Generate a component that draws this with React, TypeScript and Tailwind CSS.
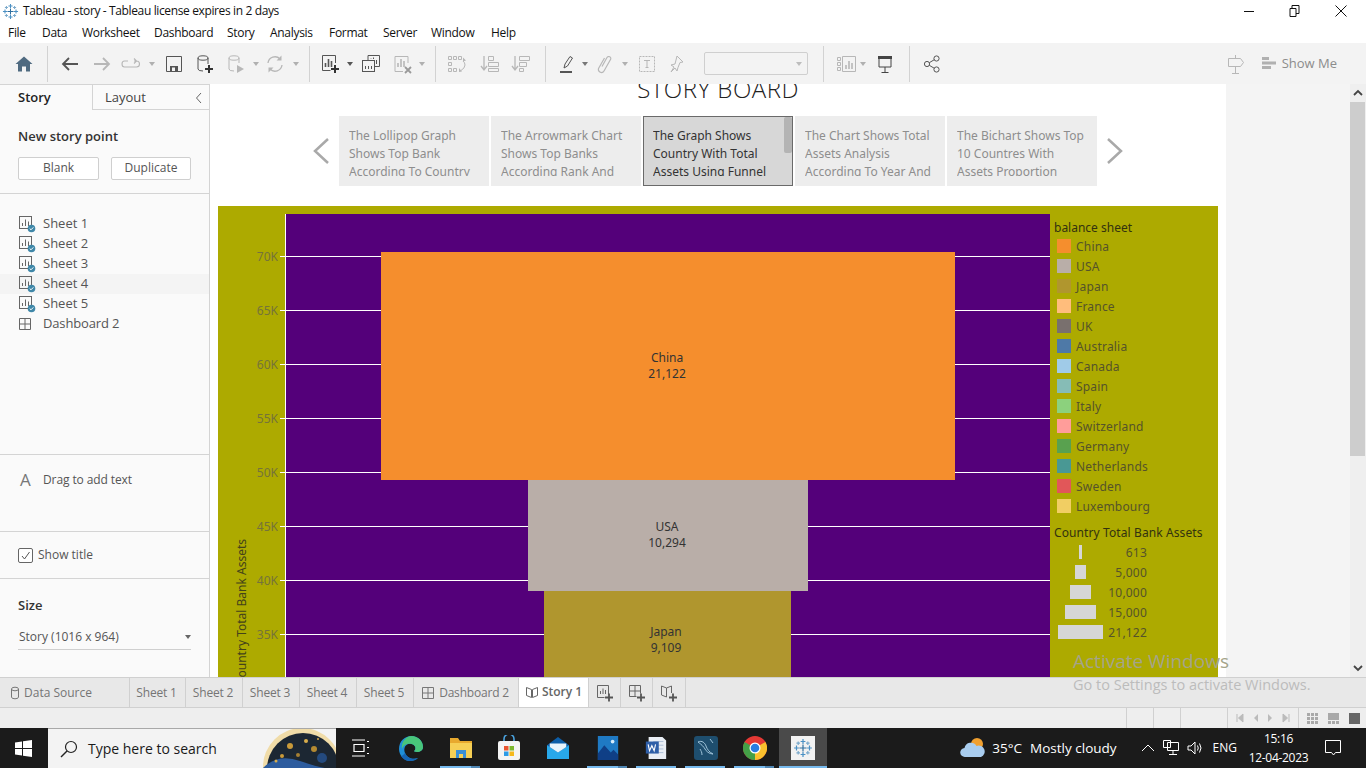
import React from "react";

const ui = "font-['Open_Sans','Noto_Sans',sans-serif]";
const tb = "font-['Noto_Sans','Open_Sans',sans-serif]";

type SvgP = { children: React.ReactNode; className?: string; w?: number; h?: number; vb?: string };
function S({ children, className = "", w = 20, h = 20, vb }: SvgP) {
  return (
    <svg width={w} height={h} viewBox={vb ?? `0 0 ${w} ${h}`} fill="none" className={"shrink-0 " + className}>
      {children}
    </svg>
  );
}
const Sep = ({ c }: { c: string }) => <div className={"h-[36px] w-px shrink-0 bg-[#d2d2d2] " + c} />;
const Dd = ({ c, d = "#8a8a8a" }: { c: string; d?: string }) => (
  <S w={6} h={4} className={c}>
    <path d="M0 0h6L3 4z" fill={d} />
  </S>
);

function TableauLogo({ size = 20, c1 = "#4a90c4", c2 = "#7aa9cb" }: { size?: number; c1?: string; c2?: string }) {
  const cross = (x: number, y: number, r: number, col: string, k: string) => (
    <path key={k} d={`M${x - r} ${y}H${x + r}M${x} ${y - r}V${y + r}`} stroke={col} strokeWidth="1.2" />
  );
  return (
    <S w={size} h={size} vb="0 0 20 20">
      {cross(10, 10, 3.6, "#2f6f9f", "a")}
      {cross(10, 3.5, 2.4, c1, "b")}
      {cross(10, 16.5, 2.4, c1, "c")}
      {cross(3.5, 10, 2.4, c1, "d")}
      {cross(16.5, 10, 2.4, c1, "e")}
      {cross(5.2, 5.2, 1.8, c2, "f")}
      {cross(14.8, 5.2, 1.8, c2, "g")}
      {cross(5.2, 14.8, 1.8, c2, "h")}
      {cross(14.8, 14.8, 1.8, c2, "i")}
    </S>
  );
}

function SheetIcon({ check = true }: { check?: boolean }) {
  return (
    <S w={18} h={18}>
      <rect x="1.5" y="1.5" width="12" height="12" stroke="#666" fill="none" />
      <path d="M4.5 11V8M7.5 11V4.5M10.5 11V6.5" stroke="#666" />
      {check && (
        <>
          <circle cx="13.5" cy="13.5" r="3.8" fill="#3f87a8" />
          <path d="M11.7 13.5l1.3 1.3 2.3-2.4" stroke="#fff" strokeWidth="1" />
        </>
      )}
    </S>
  );
}

const DashIcon = ({ col = "#666" }: { col?: string }) => (
  <S w={14} h={14}>
    <path d="M1.5 1.5h11v11h-11zM7 1.5v11M1.5 7h11" stroke={col} />
  </S>
);
const BookIcon = () => (
  <S w={14} h={14}>
    <path d="M1.5 2.5L6.5 4.500v8l-5-2zM12.500 2.500L7.500 4.500v8l5-2z" stroke="#666" />
  </S>
);

function TitleBar() {
  return (
    <div className={`flex h-[22px] items-center bg-white text-[12px] text-[#111] ${ui}`}>
      <div className="ml-[2px] w-[21px]">
        <TableauLogo size={17} />
      </div>
      <span className="tracking-[-0.37px]">Tableau - story - Tableau license expires in 2 days</span>
      <div className="ml-auto flex items-center">
        <S w={10} h={10} className="mr-[35px]">
          <path d="M0 5.500h10" stroke="#111" />
        </S>
        <S w={11} h={12} className="mr-[35px]">
          <path d="M1 3.500h6v8H1zM3 3.500v-3h7v8H7" stroke="#111" />
        </S>
        <S w={12} h={12} className="mr-[19px]">
          <path d="M.5.500l11 11M11.500.500l-11 11" stroke="#111" />
        </S>
      </div>
    </div>
  );
}

function MenuBar() {
  return (
    <div className={`flex h-[21px] items-center bg-white pl-[8px] text-[12px] tracking-[-0.3px] text-[#111] ${ui}`}>
      <span className="w-[34px]">File</span>
      <span className="w-[40px]">Data</span>
      <span className="w-[72px]">Worksheet</span>
      <span className="w-[73px]">Dashboard</span>
      <span className="w-[43px]">Story</span>
      <span className="w-[59px]">Analysis</span>
      <span className="w-[54px]">Format</span>
      <span className="w-[48px]">Server</span>
      <span className="w-[60px]">Window</span>
      <span>Help</span>
    </div>
  );
}

function Toolbar() {
  const on = "#555";
  const off = "#b7b7b7";
  return (
    <div className="flex h-[41px] items-center bg-[#f3f3f3]">
      <S className="ml-[14px]">
        <path d="M1.500 10L10 2.500 18.500 10H16v7.500h-4v-5H8v5H4V10z" fill="#4f6a80" />
      </S>
      <Sep c="ml-[13px]" />
      <S className="ml-[12px]">
        <path d="M18 10H3M9 4l-6 6 6 6" stroke={on} strokeWidth="1.800" />
      </S>
      <S className="ml-[12px]">
        <path d="M2 10h15M11 4l6 6-6 6" stroke={off} strokeWidth="1.800" />
      </S>
      <S className="ml-[9px]">
        <path d="M7 7H3.500Q1 7 1 10t2.500 3h12q3 0 3-3t-3-3H13M13 4.500L15.500 7 13 9.500" stroke={off} strokeWidth="1.100" />
      </S>
      <Dd c="ml-[8px]" d="#b0b0b0" />
      <S className="ml-[9px]">
        <path d="M2.500 2.500h15v15h-15z" stroke={on} />
        <path d="M6 17V12h8v5" fill={on} />
        <rect x="8" y="13.500" width="3" height="3.500" fill="#f3f3f3" />
      </S>
      <S className="ml-[11px]">
        <ellipse cx="8" cy="4" rx="5" ry="2.200" stroke={on} />
        <path d="M3 4v11q0 2 5 2M13 4v6" stroke={on} />
        <path d="M14 11v8M10 15h8" stroke="#333" strokeWidth="2" />
      </S>
      <S className="ml-[11px]">
        <ellipse cx="8" cy="4" rx="5" ry="2.200" stroke={off} />
        <path d="M3 4v11q0 2 5 2M13 4v5" stroke={off} />
        <path d="M11 11l7 4-7 4z" fill={off} />
      </S>
      <Dd c="ml-[7px]" d="#b0b0b0" />
      <S className="ml-[6px]">
        <path d="M3 9a7 7 0 0 1 12-4M17 11a7 7 0 0 1-12 4" stroke={off} strokeWidth="1.300" />
        <path d="M16.500 1.500v5h-5zM3.500 18.500v-5h5z" fill={off} />
      </S>
      <Dd c="ml-[8px]" d="#b0b0b0" />
      <Sep c="ml-[10px]" />
      <S className="ml-[10px]">
        <path d="M15.500 9V1.500h-13v15h8" stroke={on} />
        <path d="M5.500 13V9M8.500 13V5M11.500 13V7" stroke={on} strokeWidth="1.600" />
        <path d="M15 11v8M11 15h8" stroke="#333" strokeWidth="2" />
      </S>
      <Dd c="ml-[7px]" d="#555" />
      <S className="ml-[8px]">
        <path d="M7 6V1.500h11.500v11H14" stroke={on} />
        <rect x="1.500" y="6.500" width="12" height="11" stroke={on} fill="#f3f3f3" />
        <path d="M10 5V4.500M12.500 5V3.500M15.500 10V6M4.500 15v-3M7.500 15v-3M10.500 15v-3" stroke={on} />
      </S>
      <S className="ml-[11px]">
        <path d="M16 9V2.500H3v15h8" stroke={off} />
        <path d="M6 13V9M9 13V5M12 13V7" stroke={off} strokeWidth="1.600" />
        <path d="M13 13l6 6M19 13l-6 6" stroke="#9a9a9a" strokeWidth="1.800" />
      </S>
      <Dd c="ml-[7px]" d="#b0b0b0" />
      <Sep c="ml-[10px]" />
      <S className="ml-[11px]">
        <path d="M1.500 2.500h3v3h-3zM6.500 2.500h3v3h-3zM11.500 2.500h3v3h-3zM1.500 8.500h3v3h-3zM1.500 14.500h3v3h-3zM6.500 14.500h3v3h-3z" stroke={off} />
        <path d="M16 7a5 5 0 0 1 2 4q0 3-4 5.500" stroke={off} />
        <path d="M16 3.500v4l3-1zM12 14v4l3-.5z" fill={off} />
      </S>
      <S className="ml-[13px]">
        <path d="M4 2v13M1 12l3 4 3-4" stroke={off} strokeWidth="1.300" />
        <path d="M8.500 2.500h5v4h-5zM8.500 8.500h10v4h-10zM8.500 14.500h10v3h-10z" stroke={off} />
      </S>
      <S className="ml-[11px]">
        <path d="M4 2v13M1 12l3 4 3-4" stroke={off} strokeWidth="1.300" />
        <path d="M8.500 2.500h10v4h-10zM8.500 8.500h7v4h-7zM8.500 14.500h4v3h-4z" stroke={off} />
      </S>
      <Sep c="ml-[14px]" />
      <S className="ml-[12px]">
        <path d="M6 14l1-4L12 2.500l2.500 1.500-5 8z" stroke={on} />
        <rect x="2" y="17" width="12" height="2" fill={on} />
      </S>
      <Dd c="ml-[4px]" d="#777" />
      <S className="ml-[7px]">
        <path d="M7 12.500L12 3.500a2 2 0 0 1 3.500 2L9 17a3 3 0 0 1-5.200-3L9.500 4" stroke={off} strokeWidth="1.200" />
      </S>
      <Dd c="ml-[7px]" d="#b0b0b0" />
      <S className="ml-[9px]">
        <rect x="2.500" y="2.500" width="15" height="15" stroke={off} strokeDasharray="2 1" />
        <path d="M7 6.500h6M10 6.500v7M8.500 13.500h3" stroke={off} />
      </S>
      <S className="ml-[10px]">
        <path d="M10 2l6 6-3 .5-2 5-1 3.500-2-3-4 4 3-5-3-2 4-1z" stroke={off} />
      </S>
      <div className="ml-[17px] flex h-[23px] w-[104px] items-center justify-end rounded-[2px] border border-[#cfcfcf] bg-[#f3f3f3] pr-[5px]">
        <Dd c="" d="#bdbdbd" />
      </div>
      <Sep c="ml-[15px]" />
      <S className="ml-[12px]">
        <path d="M6.500 2.500h13v15h-13z" stroke={off} />
        <path d="M10 15v-4M13 15V7M16 15v-6" stroke={off} strokeWidth="1.600" />
        <path d="M1.500 3.500h3v3h-3zM1.500 8.500h3v3h-3zM1.500 13.500h3v3h-3z" stroke={off} />
      </S>
      <Dd c="ml-[4px]" d="#b0b0b0" />
      <S className="ml-[9px]">
        <path d="M4 4h12v9H4z" stroke="#444" fill="none" />
        <path d="M3 2h14v3H3z" fill="#444" />
        <path d="M10 13v5M6.500 18.500h7" stroke="#444" />
      </S>
      <Sep c="ml-[14px]" />
      <S className="ml-[12px]">
        <circle cx="14.500" cy="4.500" r="2.600" stroke={on} />
        <circle cx="5" cy="10" r="2.600" stroke={on} />
        <circle cx="14.500" cy="15.500" r="2.600" stroke={on} />
        <path d="M7.300 8.700l5-3M7.300 11.300l5 3" stroke={on} />
      </S>
      <S className="ml-auto">
        <path d="M9.500 1v3M9.500 13v6M6 19.500h7" stroke={off} />
        <path d="M2.500 4.500h12l3 4-3 4h-12z" stroke={off} />
      </S>
      <S w={16} h={16} className="ml-[16px]">
        <path d="M0 1h7v3H0zM0 5.500h14v3H0zM0 10h9v3H0z" fill="#b0b0b0" />
      </S>
      <span className={`ml-[4px] mr-[29px] text-[13px] text-[#8c8c8c] ${ui}`}>Show Me</span>
    </div>
  );
}

const sheets = ["Sheet 1", "Sheet 2", "Sheet 3", "Sheet 4", "Sheet 5"];

function Sidebar() {
  return (
    <div className={`flex w-[210px] shrink-0 flex-col border-r border-t border-[#d4d4d4] bg-[#fafafa] text-[#555] ${ui}`}>
      <div className="flex h-[25px] text-[13px]">
        <div className="flex w-[92px] items-center pl-[18px] font-semibold text-[#222]">Story</div>
        <div className="flex flex-1 items-center border-b border-l border-[#d4d4d4] pl-[12px] pt-[1px] text-[#444]">
          Layout
          <S w={8} h={12} className="ml-auto mr-[6px]">
            <path d="M6 1L1.500 6 6 11" stroke="#666" />
          </S>
        </div>
      </div>
      <div className="h-[84px] border-b border-[#d4d4d4] px-[18px] pt-[17px]">
        <div className="text-[13px] font-semibold leading-[18px] text-[#333]">New story point</div>
        <div className="mt-[12px] flex gap-[12px] text-[12px]">
          <div className="flex h-[23px] w-[81px] items-center justify-center rounded-[2px] border border-[#cfcfcf] bg-white pb-[2px]">Blank</div>
          <div className="flex h-[23px] w-[80px] items-center justify-center rounded-[2px] border border-[#cfcfcf] bg-white pb-[2px]">Duplicate</div>
        </div>
      </div>
      <div className="h-[261px] border-b border-[#d4d4d4] pt-[20px] text-[13px]">
        {sheets.map((s, i) => (
          <div key={s} className={"flex h-[20px] items-center pl-[18px] " + (i === 3 ? "bg-[#f4f4f4]" : "")}>
            <div className="w-[25px]">
              <SheetIcon />
            </div>
            {s}
          </div>
        ))}
        <div className="flex h-[20px] items-center pl-[18px] tracking-[-0.15px]">
          <div className="w-[25px]">
            <DashIcon />
          </div>
          Dashboard 2
        </div>
      </div>
      <div className="h-[77px] border-b border-[#d4d4d4] pt-[13px]">
        <div className="flex h-[24px] items-center text-[12px] tracking-[-0.1px]">
          <span className="w-[43px] pl-[20px] text-[17px] text-[#777]">A</span>
          Drag to add text
        </div>
      </div>
      <div className="flex h-[47px] items-center border-b border-[#d4d4d4] pl-[18px] text-[12px]">
        <div className="mr-[5px] flex h-[15px] w-[15px] items-center justify-center rounded-[2px] border border-[#666] bg-white">
          <S w={11} h={11}>
            <path d="M2 6l2.500 3L9.500 2" stroke="#555" />
          </S>
        </div>
        Show title
      </div>
      <div className="px-[18px] pt-[17px]">
        <div className="text-[13px] font-semibold leading-[18px] text-[#333]">Size</div>
        <div className="mt-[12px] flex h-[24px] items-center border-b border-[#cfcfcf] pb-[1px] pl-[1px] text-[12px]">
          Story (1016 x 964)
          <Dd c="ml-auto" d="#666" />
        </div>
      </div>
    </div>
  );
}

const storyPoints = [
  ["The Lollipop Graph", "Shows Top Bank", "According To Country"],
  ["The Arrowmark Chart", "Shows Top Banks", "According Rank And"],
  ["The Graph Shows", "Country With Total", "Assets Using Funnel"],
  ["The Chart Shows Total", "Assets Analysis", "According To Year And"],
  ["The Bichart Shows Top", "10 Countres With", "Assets Proportion"],
];

function StoryNav() {
  return (
    <div className={`mt-[11px] flex h-[70px] items-center text-[12px] leading-[18px] ${tb}`}>
      <S w={18} h={26} className="ml-[102px] mr-[9px]">
        <path d="M16 1L3 13l13 12" stroke="#a9a9a9" strokeWidth="2.500" />
      </S>
      <div className="flex gap-[2px]">
        {storyPoints.map((p, i) => (
          <div
            key={p[0]}
            className={
              "relative h-[70px] w-[150px] overflow-hidden " +
              (i === 2 ? "border border-[#6a6a6a] bg-[#d7d7d7] pl-[9px] pt-[10px] text-[#333]" : "bg-[#ededed] pl-[10px] pt-[11px] text-[#8e8e8e]")
            }
          >
            <div className="h-[49px] overflow-hidden whitespace-nowrap">
              {p.map((l) => (
                <div key={l}>{l}</div>
              ))}
            </div>
            {i === 2 && <div className="absolute right-0 top-0 h-[36px] w-[8px] rounded-[2px] bg-[#b4b4b4]" />}
          </div>
        ))}
      </div>
      <S w={18} h={26} className="ml-[9px]">
        <path d="M2 1l13 12L2 25" stroke="#a9a9a9" strokeWidth="2.500" />
      </S>
    </div>
  );
}

const ticks = ["70K", "65K", "60K", "55K", "50K", "45K", "40K", "35K"];
const legend = [
  ["China", "bg-[#f58e2d]"],
  ["USA", "bg-[#b9aea8]"],
  ["Japan", "bg-[#b0962e]"],
  ["France", "bg-[#ffbd7c]"],
  ["UK", "bg-[#79706e]"],
  ["Australia", "bg-[#4e79a7]"],
  ["Canada", "bg-[#a0cbe8]"],
  ["Spain", "bg-[#86bcb6]"],
  ["Italy", "bg-[#8cd17d]"],
  ["Switzerland", "bg-[#ff9d9a]"],
  ["Germany", "bg-[#59a14f]"],
  ["Netherlands", "bg-[#499894]"],
  ["Sweden", "bg-[#e15759]"],
  ["Luxembourg", "bg-[#f1ce63]"],
];
const sizes = [
  ["613", "w-[3px]"],
  ["5,000", "w-[11px]"],
  ["10,000", "w-[21px]"],
  ["15,000", "w-[31px]"],
  ["21,122", "w-[45px]"],
];

function Bar({ cls, name, val }: { cls: string; name: string; val: string }) {
  return (
    <div className={"relative flex shrink-0 flex-col items-center justify-center pr-[2px] text-[12px] leading-[16px] text-[#333] " + cls}>
      <span>{name}</span>
      <span>{val}</span>
    </div>
  );
}

function Dashboard() {
  return (
    <div className={`ml-[8px] mt-[20px] flex h-[480px] w-[1000px] bg-[#adaa00] pt-[8px] ${tb}`}>
      <div className="relative w-[68px] shrink-0 overflow-hidden border-r border-white">
        {ticks.map((t, i) => (
          <div key={t} className="absolute right-0 flex h-[16px] items-center text-[12px] text-[#75733a]" style={{ top: 34 + i * 54 }}>
            <span className="pt-[2px]">{t}</span>
            <div className="ml-[2px] h-px w-[5px] bg-white" />
          </div>
        ))}
        <div className="absolute left-[17px] top-[325px] whitespace-nowrap text-[12px] leading-[14px] text-[#44421a] [writing-mode:vertical-rl] rotate-180">
          Country Total Bank Assets
        </div>
      </div>
      <div className="relative flex w-[764px] shrink-0 flex-col items-center overflow-hidden bg-[#54007a] pt-[38px]">
        {ticks.map((t, i) => (
          <div key={t} className="absolute left-0 right-0 h-px bg-white" style={{ top: 42 + i * 54 }} />
        ))}
        <Bar cls="h-[228px] w-[574px] bg-[#f58e2d]" name="China" val="21,122" />
        <Bar cls="h-[111px] w-[280px] bg-[#b9aea8] pb-[2px]" name="USA" val="10,294" />
        <Bar cls="mr-[2px] h-[98px] w-[247px] bg-[#b0962e]" name="Japan" val="9,109" />
      </div>
      <div className="flex-1 overflow-hidden pl-[4px] pt-[4px] text-[12px] tracking-[0.2px] text-[#55532a]">
        <div className="flex h-[18px] items-center pt-[2px] tracking-normal text-[#33320f]">balance sheet</div>
        {legend.map(([n, c]) => (
          <div key={n} className="flex h-[20px] items-center pl-[3px]">
            <div className={"mr-[5px] h-[14px] w-[14px] " + c} />
            <span className="pt-[2px]">{n}</span>
          </div>
        ))}
        <div className="mt-[8px] flex h-[18px] items-center tracking-[0.1px] text-[#33320f]">Country Total Bank Assets</div>
        {sizes.map(([v, c]) => (
          <div key={v} className="flex h-[20px] items-center">
            <div className="flex w-[53px] justify-center">
              <div className={"h-[14px] bg-[#d6d6d6] " + c} />
            </div>
            <div className="w-[40px] pt-[2px] text-right">{v}</div>
          </div>
        ))}
      </div>
    </div>
  );
}

function Main() {
  return (
    <div className="flex h-[593px] overflow-hidden">
      <Sidebar />
      <div className="w-[1016px] shrink-0 overflow-hidden bg-white">
        <div className={`-mt-[11px] h-[32px] text-center text-[24px] font-light leading-[32px] tracking-[0.5px] text-[#222] ${ui}`}>
          STORY BOARD
        </div>
        <StoryNav />
        <Dashboard />
      </div>
      <div className="flex-1 bg-[#f4f4f4]" />
      <div className="flex w-[16px] shrink-0 flex-col items-center bg-[#efefef]">
        <S w={16} h={18}>
          <path d="M4 11l4-4 4 4" stroke="#444" strokeWidth="1.800" />
        </S>
        <div className="h-[354px] w-[15px] self-start bg-[#cdcdcd]" />
        <S w={16} h={18} className="mt-auto">
          <path d="M4 7l4 4 4-4" stroke="#444" strokeWidth="1.800" />
        </S>
      </div>
    </div>
  );
}

function Tab({ cls, children }: { cls: string; children: React.ReactNode }) {
  return <div className={"flex h-full shrink-0 items-center justify-center border-r border-[#d0d0d0] " + cls}>{children}</div>;
}

function AddIcon({ kind }: { kind: "sheet" | "dash" | "story" }) {
  return (
    <S w={18} h={18}>
      {kind === "sheet" && <path d="M1.500 1.500h11v9M1.500 1.500v12h7M4.500 10V7M7 10V4.500M9.500 10V6" stroke="#666" />}
      {kind === "dash" && <path d="M1.500 1.500h11v8M1.500 1.500v11h7M7 1.500v11M1.500 7h11" stroke="#666" />}
      {kind === "story" && <path d="M1.500 2L6.500 4v9l-5-2zM11.500 2L6.500 4M11.500 2v7" stroke="#666" />}
      <path d="M13 9.500v8M9 13.500h8" stroke="#555" strokeWidth="1.800" />
    </S>
  );
}

function TabBar() {
  return (
    <div className={`flex h-[31px] border-y border-[#d0d0d0] bg-[#e8e8e8] text-[12px] text-[#757575] ${ui}`}>
      <Tab cls="w-[130px] justify-start pl-[10px]">
        <S w={10} h={14} className="mr-[4px]">
          <ellipse cx="5" cy="3" rx="3.500" ry="1.800" stroke="#777" />
          <path d="M1.500 3v8q0 1.800 3.500 1.800T8.500 11V3" stroke="#777" />
        </S>
        Data Source
      </Tab>
      {sheets.map((s, i) => (
        <Tab key={s} cls={"pr-[2px] tracking-[-0.2px] " + (i === 0 ? "w-[56px]" : "w-[57px]")}>
          {s}
        </Tab>
      ))}
      <Tab cls="w-[105px] gap-[4px] pr-[2px] tracking-[-0.2px]">
        <DashIcon col="#777" />
        Dashboard 2
      </Tab>
      <Tab cls="w-[70px] gap-[3px] bg-white pb-[2px] font-semibold text-[#666]">
        <BookIcon />
        Story 1
      </Tab>
      <Tab cls="w-[32px]">
        <AddIcon kind="sheet" />
      </Tab>
      <Tab cls="w-[32px]">
        <AddIcon kind="dash" />
      </Tab>
      <Tab cls="w-[33px]">
        <AddIcon kind="story" />
      </Tab>
    </div>
  );
}

function StatusBar() {
  const d = "border-l border-[#d0d0d0]";
  return (
    <div className="flex h-[20px] items-stretch bg-[#eeeeee]">
      <div className="flex-1" />
      <div className={"w-[27px] " + d} />
      <div className={"w-[27px] " + d} />
      <div className={"w-[47px] " + d} />
      <div className={"flex w-[71px] items-center justify-between px-[8px] " + d}>
        <S w={8} h={10}>
          <path d="M1 1v8M7 1v8L2.500 5z" stroke="#bbb" fill="#bbb" />
        </S>
        <S w={6} h={10}>
          <path d="M5 1v8L1 5z" fill="#bbb" />
        </S>
        <S w={6} h={10}>
          <path d="M1 1v8l4-4z" fill="#bbb" />
        </S>
        <S w={8} h={10}>
          <path d="M7 1v8M1 1v8L5.500 5z" stroke="#bbb" fill="#bbb" />
        </S>
      </div>
      <div className={"flex w-[68px] items-center gap-[10px] pl-[8px] " + d}>
        <S w={11} h={11}>
          <path d="M0 0h3v3H0zM4 0h3v3H4zM8 0h3v3H8zM0 4h3v3H0zM4 4h3v3H4zM8 4h3v3H8zM0 8h3v3H0zM4 8h3v3H4zM8 8h3v3H8z" fill="#a9a9a9" />
        </S>
        <S w={11} h={11}>
          <path d="M0 0h11v7H0zM0 8h3v3H0zM4 8h3v3H4zM8 8h3v3H8z" fill="#a9a9a9" />
        </S>
        <div className="h-[11px] w-[11px] bg-[#666]" />
      </div>
    </div>
  );
}

function Under({ stack = false }: { stack?: boolean }) {
  return (
    <div className="absolute bottom-0 left-[4px] flex h-[2px]">
      <div className={"h-full bg-[#76b9ed] " + (stack ? "w-[31px]" : "w-[40px]")} />
      {stack && <div className="h-full w-[9px] bg-[#4f86b3]" />}
    </div>
  );
}

function Taskbar() {
  return (
    <div className={`flex h-[40px] items-center bg-[#1b1b1b] text-white ${ui}`}>
      <S w={17} h={17} className="ml-[15px]">
        <path d="M0 2.400L7 1.400V8H0zM8 1.300L17 0v8H8zM0 9h7v6.600L0 14.600zM8 9h9v8l-9-1.300z" fill="#fff" />
      </S>
      <div className="relative ml-[16px] flex h-[40px] w-[288px] items-center overflow-hidden border-t border-[#a8a8a8] bg-[#f3f3f3] pl-[12px] text-[14px] text-[#1a1a1a]">
        <S w={18} h={18} className="mr-[10px]">
          <circle cx="11" cy="7" r="5.500" stroke="#222" strokeWidth="1.200" />
          <path d="M7 11l-6 6" stroke="#222" strokeWidth="1.400" />
        </S>
        Type here to search
        <svg width="76" height="40" viewBox="0 0 76 40" className="absolute right-0 top-0">
          <circle cx="42" cy="38" r="39" fill="#f0dca8" />
          <circle cx="43" cy="40" r="36" fill="#1c2733" />
          <path d="M2 40q15-16 38-8t34 8z" fill="#2d5c9e" />
          <circle cx="30" cy="17" r="3" fill="#c99a3a" />
          <circle cx="46" cy="12" r="2" fill="#d8ad4c" />
          <circle cx="54" cy="20" r="3" fill="#b48a32" />
          <circle cx="22" cy="27" r="2" fill="#c99a3a" />
          <circle cx="38" cy="26" r="2" fill="#a57f33" />
          <circle cx="62" cy="29" r="5" fill="#244a7e" />
          <circle cx="58" cy="10" r="1" fill="#d8ad4c" />
          <circle cx="16" cy="32" r="1.500" fill="#d8ad4c" />
        </svg>
      </div>
      <S w={18} h={18} className="ml-[15px]">
        <path d="M1 1h13M1 17h13M3 5.500h10v7H3zM16 2.500h2M16 8.500h2M16 14.500h2" stroke="#fff" strokeWidth="1.200" />
      </S>
      <div className="relative ml-[18px] flex h-[40px] w-[49px] items-center justify-center pr-[1px]">
        <svg width="26" height="26" viewBox="0 0 26 26">
          <path d="M1 14C1 6 7 1 13.500 1 20 1 25 6 25 12c0 3.500-3 5-6 5-2 0-3-1-3-1 2-1 2.500-6-2.500-7C8 8 5 13 7 18c2 5 8 7 13 5-2 2-5 3-8 3C6 26 1 20 1 14z" fill="#1f8fd8" />
          <path d="M25 12c0 3.500-3 5-6 5-2 0-3-1-3-1 2-1 2.500-6-2.500-7C9 8 5 10.500 4 14 3 7 8 1 13.500 1 20 1 25 6 25 12z" fill="#49c67a" />
          <path d="M7 18c2 5 8 7 13 5-2 2-5 3-8 3-4 0-7-2-9-5 1 0 2.500-1 4-3z" fill="#1565b5" />
        </svg>
      </div>
      <div className="relative flex h-[40px] w-[49px] items-center justify-center">
        <svg width="22" height="20" viewBox="0 0 22 20">
          <path d="M0 0h8l2 3h12v17H0z" fill="#e8a92e" />
          <path d="M0 5h22v15H0z" fill="#f6cf55" />
          <path d="M6 12h10v8h-3v-4H9v4H6z" fill="#3a8fd6" />
        </svg>
        <Under stack />
      </div>
      <div className="relative flex h-[40px] w-[49px] items-center justify-center pr-[2px]">
        <svg width="24" height="26" viewBox="0 0 24 26">
          <path d="M7 7V4a5 5 0 0 1 10 0v3" stroke="#4aa3df" strokeWidth="1.600" fill="none" />
          <rect x="1" y="6" width="22" height="19" rx="2" fill="#f4f4f4" />
          <rect x="7" y="11" width="4.500" height="4.500" fill="#e8542f" />
          <rect x="12.500" y="11" width="4.500" height="4.500" fill="#7cb82f" />
          <rect x="7" y="16.500" width="4.500" height="4.500" fill="#2e9be6" />
          <rect x="12.500" y="16.500" width="4.500" height="4.500" fill="#f6b91c" />
        </svg>
      </div>
      <div className="relative flex h-[40px] w-[49px] items-center justify-center pr-[1px]">
        <svg width="24" height="22" viewBox="0 0 26 24">
          <path d="M13 0L1 9v15h24V9z" fill="#0d5ea8" />
          <path d="M1 9l12 8 12-8v15H1z" fill="#28a8ea" />
          <path d="M4 7h18v4l-9 6-9-6z" fill="#e8f4fb" />
        </svg>
      </div>
      <div className="relative flex h-[40px] w-[49px] items-center justify-center">
        <svg width="24" height="24" viewBox="0 0 24 26">
          <rect x="1" y="0" width="22" height="26" fill="#1f7ac4" />
          <path d="M1 26V19l7-9 7 8 3-3 5 5v6z" fill="#0f3f86" />
          <circle cx="17" cy="6" r="2" fill="#d6ecfb" />
        </svg>
        <Under stack />
      </div>
      <div className="relative flex h-[40px] w-[49px] items-center justify-center pr-[2px]">
        <svg width="24" height="24" viewBox="0 0 24 26">
          <path d="M4 1h15l4 4v20H4z" fill="#e9eef5" />
          <path d="M9 6h11M9 10h11M9 14h11M9 18h11" stroke="#a9bcd6" />
          <rect x="1" y="6" width="14" height="13" fill="#2f5fa8" />
          <path d="M3.500 9l1.500 7 2.500-5.500L10 16l1.500-7" stroke="#fff" strokeWidth="1.200" fill="none" />
        </svg>
        <Under />
      </div>
      <div className="relative flex h-[40px] w-[49px] items-center justify-center">
        <svg width="24" height="24" viewBox="0 0 24 24">
          <rect x="0" y="0" width="24" height="24" rx="3" fill="#1e4e6e" />
          <path d="M4 6c4-2 7 1 8 4s3 6 7 8c-4 0-7-3-8-5S7 8 4 6zM8 19c0-3-1-4-2-6M16 3l3 4" stroke="#9fc3d9" strokeWidth="1" fill="none" />
        </svg>
        <Under />
      </div>
      <div className="relative flex h-[40px] w-[49px] items-center justify-center">
        <svg width="24" height="24" viewBox="0 0 24 24">
          <circle cx="12" cy="12" r="12" fill="#e53935" />
          <path d="M12 12L22.400 6A12 12 0 0 1 12 24z" fill="#fbc02d" />
          <path d="M12 12L12 24A12 12 0 0 1 1.600 6z" fill="#43a047" />
          <circle cx="12" cy="12" r="5.500" fill="#fff" />
          <circle cx="12" cy="12" r="4.300" fill="#2a7de1" />
        </svg>
        <Under stack />
      </div>
      <div className="relative flex h-[40px] w-[48px] items-center justify-center bg-[#4a4a4a]">
        <div className="flex h-[24px] w-[24px] items-center justify-center bg-[#f2f2f2]">
          <TableauLogo size={20} />
        </div>
        <div className="absolute bottom-0 left-0 right-0 h-[2px] bg-[#76b9ed]" />
      </div>
      <div className="ml-auto flex items-center">
        <svg width="26" height="24" viewBox="0 0 26 24">
          <circle cx="17" cy="8" r="6" fill="#f0a030" />
          <path d="M5 21a4.500 4.500 0 0 1-.5-9 6.500 6.500 0 0 1 12-2 5.500 5.500 0 0 1 4.500 11z" fill="#a9cdef" />
        </svg>
        <span className="ml-[6px] text-[13.500px]">35°C</span>
        <span className="ml-[8px] text-[13.500px]">Mostly cloudy</span>
        <S w={14} h={8} className="ml-[24px]">
          <path d="M1 7l6-6 6 6" stroke="#fff" />
        </S>
        <S w={16} h={18} className="ml-[8px]">
          <path d="M4.500 3.500h11v8h-11zM10 11.500v4M6 15.500h8M.500 1.500h7v7h-7z" stroke="#fff" fill="none" />
        </S>
        <S w={16} h={18} className="ml-[8px]">
          <path d="M1 7h3l4-4v12l-4-4H1zM10.500 6.500q1.500 2.500 0 5M12.500 4.500q3 4.500 0 9" stroke="#fff" fill="none" />
        </S>
        <span className="ml-[10px] text-[12px]">ENG</span>
        <div className="ml-[13px] flex w-[57px] flex-col items-center whitespace-nowrap text-[12px] leading-[19px] tracking-[-0.3px]">
          <span>15:16</span>
          <span>12-04-2023</span>
        </div>
        <S w={16} h={16} className="ml-[18px] mr-[25px]">
          <path d="M.5.500h15v12h-5l-2 2.500-2-2.500h-6z" stroke="#fff" />
        </S>
      </div>
    </div>
  );
}

export default function App() {
  return (
    <div className="relative h-[768px] w-[1366px] overflow-hidden bg-white">
      <TitleBar />
      <MenuBar />
      <Toolbar />
      <Main />
      <TabBar />
      <StatusBar />
      <Taskbar />
      <div className={`pointer-events-none absolute left-[1073px] top-[649px] ${ui}`}>
        <div className="text-[19px] leading-[25px] text-[#a4a48a]">Activate Windows</div>
        <div className="mt-[1px] text-[14.500px] leading-[20px] text-[#bcbcbc]">Go to Settings to activate Windows.</div>
      </div>
    </div>
  );
}
